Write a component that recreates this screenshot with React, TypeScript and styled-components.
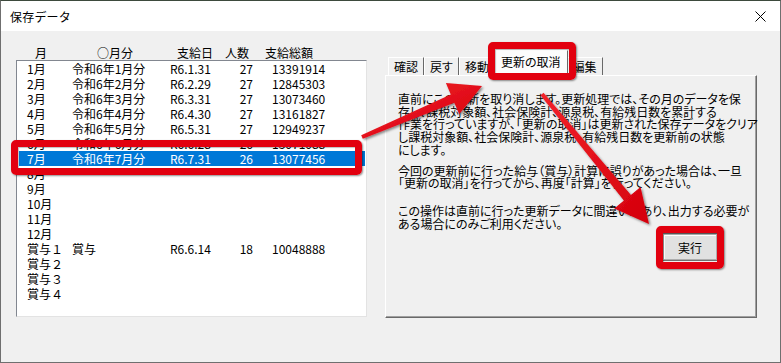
import React from 'react'
import styled, { createGlobalStyle, css } from 'styled-components'

const GlobalStyle = createGlobalStyle`
  html, body {
    margin: 0;
    padding: 0;
    background: #ffffff;
  }
  body {
    font-family: "Noto Sans CJK JP", "Noto Sans", sans-serif;
    font-size: 12px;
    color: #000;
  }
`

const RED = '#e2000f'

// red rounded frame drawn over a part, offsets say how far it sticks out
const redFrame = (top: number, right: number, bottom: number, left: number) => css`
  position: relative;
  &::after {
    content: '';
    position: absolute;
    top: ${top}px;
    right: ${right}px;
    bottom: ${bottom}px;
    left: ${left}px;
    border: 7px solid ${RED};
    border-radius: 5px;
    box-shadow: 1px 1px 2px rgba(0, 0, 0, 0.45), inset 1px 1px 1px rgba(0, 0, 0, 0.25);
    pointer-events: none;
    z-index: 5;
  }
`

const Window = styled.div`
  position: relative;
  width: 781px;
  height: 363px;
  box-sizing: border-box;
  border: 1px solid #6f6f6f;
  border-top-color: #3d4a3d;
  display: flex;
  flex-direction: column;
  background: #f0f0f0;
  overflow: hidden;
`

const TitleBar = styled.div`
  height: 30px;
  flex: none;
  background: #fff;
  display: flex;
  align-items: center;
  justify-content: space-between;
  padding: 0 10px 0 9px;
`

const Title = styled.span`
  font-size: 12px;
  letter-spacing: 0.2px;
`

const CloseIcon = styled.svg`
  width: 11px;
  height: 11px;
  margin-right: 4px;
`

const Body = styled.div`
  flex: 1;
  display: flex;
  align-items: flex-start;
  padding: 14px 23px 0 15px;
`

const LeftPane = styled.div`
  width: 351px;
  display: flex;
  flex-direction: column;
`

const columns = '45px 98px 60px 23px 1fr'

const ColumnHeader = styled.div`
  display: grid;
  grid-template-columns: 81px 80px 48px 40px 1fr;
  height: 15px;
  line-height: 15px;
  white-space: nowrap;
`

const HeaderCell = styled.span<{ $pad?: number }>`
  padding-left: ${({ $pad }) => $pad ?? 0}px;
`

const ListBox = styled.div`
  height: 257px;
  box-sizing: border-box;
  background: #fff;
  border: 1px solid;
  border-color: #828790 #e3e3e3 #e3e3e3 #828790;
  padding: 0 1px 0 2px;
`

const Row = styled.div<{ $selected?: boolean }>`
  display: grid;
  grid-template-columns: ${columns};
  height: 15px;
  line-height: 15px;
  padding-left: 8px;
  white-space: nowrap;
  ${({ $selected }) =>
    $selected &&
    css`
      background: #0078d7;
      color: #fff;
      ${redFrame(-11, 3, -9, -8)}
    `}
`

const Cell = styled.span<{ $right?: boolean; $pad?: number }>`
  text-align: ${({ $right }) => ($right ? 'right' : 'left')};
  padding-left: ${({ $pad }) => $pad ?? 0}px;
`

const RightPane = styled.div`
  margin-left: 18px;
  margin-top: 5px;
  display: flex;
  flex-direction: column;
`

const TabStrip = styled.div`
  display: flex;
  align-items: flex-end;
  height: 25px;
  padding-left: 3px;
  position: relative;
  z-index: 2;
`

const Tab = styled.div<{ $active?: boolean }>`
  height: 17px;
  line-height: 17px;
  padding: 0 5px;
  border-top: 1px solid #fff;
  border-left: 1px solid #fff;
  border-right: 1px solid #696969;
  background: #f0f0f0;
  white-space: nowrap;
  font-feature-settings: 'palt';
  ${({ $active }) =>
    $active &&
    css`
      height: 25px;
      line-height: 22px;
      margin: 0 -2px 0 -2px;
      padding: 0 7px;
      background: #fcfcfc;
      margin-bottom: -1px;
      z-index: 3;
      ${redFrame(-9, -9, -4, -6)}
    `}
`

const TabPanel = styled.div`
  width: 372px;
  height: 243px;
  box-sizing: border-box;
  border: 1px solid;
  border-color: #fff #696969 #696969 #fff;
  box-shadow: inset -1px -1px 0 #a0a0a0;
  padding: 17px 10px 0 12px;
  font-feature-settings: 'palt';
`

const Paragraph = styled.p<{ $gap: number }>`
  margin: 0 0 ${({ $gap }) => $gap}px;
  line-height: 12.7px;
  white-space: nowrap;
`

const ButtonRow = styled.div`
  display: flex;
  justify-content: flex-end;
  padding-right: 29px;
  margin-top: 4px;
`

const ActionButton = styled.button`
  width: 54px;
  height: 26px;
  font: inherit;
  color: #000;
  background: #e1e1e1;
  border: 1px solid #adadad;
  box-shadow: inset 1px 1px 0 #fff, 0 0 0 1px #707070;
  padding: 0;
  ${redFrame(-9, -8, -10, -8)}
`

const Overlay = styled.svg`
  position: absolute;
  left: -1px;
  top: -1px;
  width: 781px;
  height: 363px;
  pointer-events: none;
  z-index: 10;
`

type Rec = { m: string; label?: string; date?: string; n?: string; total?: string }

const records: Rec[] = [
  { m: '1月', label: '令和6年1月分', date: 'R6.1.31', n: '27', total: '13391914' },
  { m: '2月', label: '令和6年2月分', date: 'R6.2.29', n: '27', total: '12845303' },
  { m: '3月', label: '令和6年3月分', date: 'R6.3.31', n: '27', total: '13073460' },
  { m: '4月', label: '令和6年4月分', date: 'R6.4.30', n: '27', total: '13161827' },
  { m: '5月', label: '令和6年5月分', date: 'R6.5.31', n: '27', total: '12949237' },
  { m: '6月', label: '令和6年6月分', date: 'R6.6.28', n: '26', total: '13071088' },
  { m: '7月', label: '令和6年7月分', date: 'R6.7.31', n: '26', total: '13077456' },
  { m: '8月' },
  { m: '9月' },
  { m: '10月' },
  { m: '11月' },
  { m: '12月' },
  { m: '賞与１', label: '賞与', date: 'R6.6.14', n: '18', total: '10048888' },
  { m: '賞与２' },
  { m: '賞与３' },
  { m: '賞与４' },
]

// arrow outline from tail to tip, shaft widening toward the head
function arrowPoints(x1: number, y1: number, x2: number, y2: number, tailW: number, neckW: number, headLen: number, headW: number) {
  const dx = x2 - x1
  const dy = y2 - y1
  const len = Math.hypot(dx, dy)
  const ux = dx / len
  const uy = dy / len
  const px = -uy
  const py = ux
  const bx = x2 - ux * headLen
  const by = y2 - uy * headLen
  const pts = [
    [x1 + (px * tailW) / 2, y1 + (py * tailW) / 2],
    [bx + (px * neckW) / 2, by + (py * neckW) / 2],
    [bx + (px * headW) / 2, by + (py * headW) / 2],
    [x2, y2],
    [bx - (px * headW) / 2, by - (py * headW) / 2],
    [bx - (px * neckW) / 2, by - (py * neckW) / 2],
    [x1 - (px * tailW) / 2, y1 - (py * tailW) / 2],
  ]
  return pts.map(([x, y]) => `${x.toFixed(1)},${y.toFixed(1)}`).join(' ')
}

function Arrows() {
  return (
    <Overlay viewBox="0 0 781 363">
      <defs>
        <linearGradient id="arrowRed" x1="0" y1="0" x2="1" y2="1">
          <stop offset="0" stopColor="#f3222a" />
          <stop offset="1" stopColor="#d4000c" />
        </linearGradient>
        <filter id="arrowShadow" x="-10%" y="-10%" width="130%" height="130%">
          <feDropShadow dx="1.5" dy="1.5" stdDeviation="1.2" floodColor="#000" floodOpacity="0.45" />
        </filter>
      </defs>
      <polygon points={arrowPoints(362, 137, 482, 86, 4, 9, 32, 34)} fill="url(#arrowRed)" filter="url(#arrowShadow)" />
      <polygon points={arrowPoints(542, 94, 649, 224, 4, 9, 34, 34)} fill="url(#arrowRed)" filter="url(#arrowShadow)" />
    </Overlay>
  )
}

export default function App() {
  return (
    <>
      <GlobalStyle />
      <Window>
        <TitleBar>
          <Title>保存データ</Title>
          <CloseIcon viewBox="0 0 11 11">
            <path d="M0.5 0.5 L10.5 10.5 M10.5 0.5 L0.5 10.5" stroke="#000" strokeWidth="1" fill="none" />
          </CloseIcon>
        </TitleBar>
        <Body>
          <LeftPane>
            <ColumnHeader>
              <HeaderCell $pad={19}>月</HeaderCell>
              <HeaderCell>○月分</HeaderCell>
              <HeaderCell>支給日</HeaderCell>
              <HeaderCell>人数</HeaderCell>
              <HeaderCell>支給総額</HeaderCell>
            </ColumnHeader>
            <ListBox>
              {records.map((r, i) => (
                <Row key={r.m} $selected={i === 6}>
                  <Cell>{r.m}</Cell>
                  <Cell>{r.label}</Cell>
                  <Cell>{r.date}</Cell>
                  <Cell $right>{r.n}</Cell>
                  <Cell $pad={19}>{r.total}</Cell>
                </Row>
              ))}
            </ListBox>
          </LeftPane>
          <RightPane>
            <TabStrip>
              <Tab>確認</Tab>
              <Tab>戻す</Tab>
              <Tab>移動</Tab>
              <Tab $active>更新の取消</Tab>
              <Tab>編集</Tab>
            </TabStrip>
            <TabPanel>
              <Paragraph $gap={8}>
                直前にこの更新を取り消します。更新処理では、その月のデータを保
                <br />
                存し、課税対象額、社会保険計、源泉税、有給残日数を累計する
                <br />
                作業を行っていますが、「更新の取消」は更新された保存データをクリア
                <br />
                し課税対象額、社会保険計、源泉税、有給残日数を更新前の状態
                <br />
                にします。
              </Paragraph>
              <Paragraph $gap={15}>
                今回の更新前に行った給与（賞与）計算に誤りがあった場合は、一旦
                <br />
                「更新の取消」を行ってから、再度「計算」を行ってください。
              </Paragraph>
              <Paragraph $gap={0}>
                この操作は直前に行った更新データに間違いがあり、出力する必要が
                <br />
                ある場合にのみご利用ください。
              </Paragraph>
              <ButtonRow>
                <ActionButton type="button">実行</ActionButton>
              </ButtonRow>
            </TabPanel>
          </RightPane>
        </Body>
        <Arrows />
      </Window>
    </>
  )
}
